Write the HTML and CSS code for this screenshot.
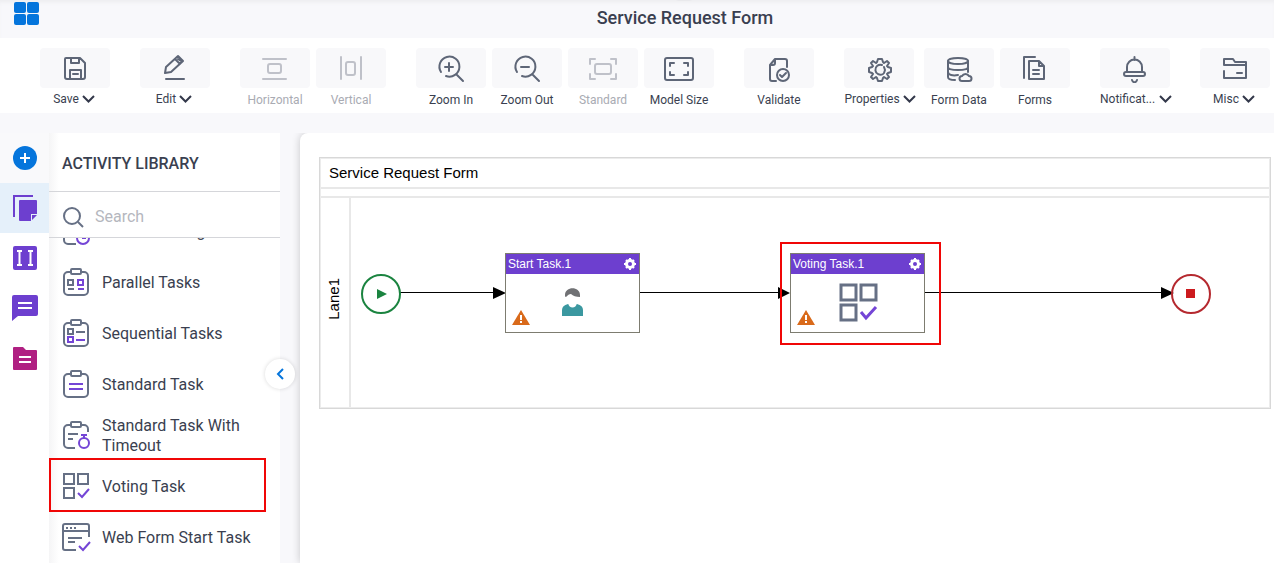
FILE: index.html
```html
<!DOCTYPE html>
<html lang="en">
<head>
  <meta charset="utf-8" />
  <title>Service Request Form</title>
  <meta name="viewport" content="width=device-width, initial-scale=1.0" />
  <link rel="stylesheet" href="styles.css">
</head>

<body>
  <header class="titlebar">
    <button class="apps" title="Apps">
      <svg width="26" height="24" viewBox="0 0 26 24" fill="#0575dc">
        <rect x="0" y="1" width="12" height="11" rx="2" /><rect x="13" y="1" width="12" height="11" rx="2" />
        <rect x="0" y="13" width="12" height="11" rx="2" /><rect x="13" y="13" width="12" height="11" rx="2" />
      </svg>
    </button>
    <h1>Service Request Form</h1>
    <span class="notch"></span>
  </header>

  <nav class="toolbar">
    <div class="group">
      <button class="tool menu">
        <span class="tile"><svg class="icon" viewBox="0 0 30 30"><path d="M6 5h14l5 5v14a2 2 0 0 1-2 2H7a2 2 0 0 1-2-2V6a1 1 0 0 1 1-1zM11 5v5h8V5M10 26v-9h11v9M13 21h5" /></svg></span>
        <span class="label">Save <svg class="caret" viewBox="0 0 13 8"><path d="M1 1l5.5 5.5L12 1" /></svg></span>
      </button>
    </div>
    <div class="group">
      <button class="tool menu">
        <span class="tile"><svg class="icon" viewBox="0 0 30 30"><path d="M5 20l1-6L18 3l5 5-12 11zM15 6l5 5M18 6l3 2M6 26h18" /></svg></span>
        <span class="label">Edit <svg class="caret" viewBox="0 0 13 8"><path d="M1 1l5.5 5.5L12 1" /></svg></span>
      </button>
    </div>
    <div class="group">
      <button class="tool" disabled>
        <span class="tile"><svg class="icon" viewBox="0 0 30 30"><path d="M3 6h23M3 26h23" /><rect x="8" y="11" width="13" height="9" rx="2" /></svg></span>
        <span class="label">Horizontal</span>
      </button>
      <button class="tool" disabled>
        <span class="tile"><svg class="icon" viewBox="0 0 30 30"><path d="M5 4v22M25 4v22" /><rect x="10" y="9" width="9" height="13" rx="2" /></svg></span>
        <span class="label">Vertical</span>
      </button>
    </div>
    <div class="group">
      <button class="tool">
        <span class="tile"><svg class="icon" viewBox="0 0 30 30"><path d="M5 19a10 10 0 1 1 5 4M20 21l7 7M9 14h8M13 10v8" /></svg></span>
        <span class="label">Zoom In</span>
      </button>
      <button class="tool">
        <span class="tile"><svg class="icon" viewBox="0 0 30 30"><path d="M5 19a10 10 0 1 1 5 4M20 21l7 7M9 14h8" /></svg></span>
        <span class="label">Zoom Out</span>
      </button>
      <button class="tool" disabled>
        <span class="tile"><svg class="icon" viewBox="0 0 30 30"><path d="M2 11V6h5M23 6h5v5M28 21v5h-5M7 26H2v-5" /><rect x="7" y="11" width="16" height="10" rx="2" /></svg></span>
        <span class="label">Standard</span>
      </button>
      <button class="tool">
        <span class="tile"><svg class="icon" viewBox="0 0 30 30"><rect x="1" y="5" width="28" height="22" rx="2" /><path d="M6 13v-3h4M20 10h4v3M24 19v3h-4M10 22H6v-3" /></svg></span>
        <span class="label">Model Size</span>
      </button>
    </div>
    <div class="group">
      <button class="tool">
        <span class="tile"><svg class="icon" viewBox="0 0 30 30"><path d="M23 14V8a2 2 0 0 0-2-2H11l-5 6v14a2 2 0 0 0 2 2h4M11 6v4a2 2 0 0 1-2 2H6" /><circle cx="19" cy="22" r="6" /><path d="M16 22l2 2 4-4" /></svg></span>
        <span class="label">Validate</span>
      </button>
    </div>
    <div class="group">
      <button class="tool menu wide">
        <span class="tile">
          <svg class="icon" viewBox="0 0 30 30">
            <g transform="translate(16 17)">
              <path d="M11-2V2L8 3 7 4 9 7 7 9 4 7 3 8 2 11H-2L-3 8-4 7-7 9-9 7-7 4-8 3-11 2V-2L-8-3-7-4-9-7-7-9-4-7-3-8-2-11H2L3-8 4-7 7-9 9-7 7-4 8-3z" />
              <path d="M3 4A5 5 0 1 1 2-5M4-3l1 3-1 3" />
            </g>
          </svg>
        </span>
        <span class="label">Properties <svg class="caret" viewBox="0 0 13 8"><path d="M1 1l5.5 5.5L12 1" /></svg></span>
      </button>
      <button class="tool">
        <span class="tile"><svg class="icon" viewBox="0 0 30 30"><ellipse cx="14" cy="8" rx="10" ry="3" /><path d="M4 8v6c0 4 20 4 20 0V8M4 14v5c0 3 5 4 10 3M24 14v5M4 19v5c0 2 3 3 7 3M18 28h7a2 2 0 0 0 0-5 4 4 0 0 0-7 0 2 2 0 0 0 0 5z" /></svg></span>
        <span class="label">Form Data</span>
      </button>
      <button class="tool">
        <span class="tile"><svg class="icon" viewBox="0 0 30 30"><path d="M4 25V4h11M9 8h10l5 5v13H9zM19 8v5h5M13 17h6M13 21h6" /></svg></span>
        <span class="label">Forms</span>
      </button>
    </div>
    <div class="group">
      <button class="tool menu">
        <span class="tile"><svg class="icon" viewBox="0 0 30 30"><path d="M7 19v-5a7.5 7.5 0 0 1 15 0v5M14.5 7V4M12 27c1 3 4 3 5 0" /><rect x="4" y="19" width="21" height="4" rx="2" /></svg></span>
        <span class="label long"><span>Notificat...</span> <svg class="caret" viewBox="0 0 13 8"><path d="M1 1l5.5 5.5L12 1" /></svg></span>
      </button>
    </div>
    <div class="group">
      <button class="tool menu">
        <span class="tile"><svg class="icon" viewBox="0 0 30 30"><path d="M4 12V6h9l2 3h11v16H4v-7M4 12h22M17 20h5" /></svg></span>
        <span class="label">Misc <svg class="caret" viewBox="0 0 13 8"><path d="M1 1l5.5 5.5L12 1" /></svg></span>
      </button>
    </div>
  </nav>

  <main class="workspace">
    <nav class="rail">
      <button class="add" title="Add"><svg viewBox="0 0 30 30"><circle cx="15" cy="15" r="12" fill="#0575dc" /><path d="M15 10v10M10 15h10" stroke="#fff" stroke-width="2" /></svg></button>
      <button class="active" title="Activities"><svg viewBox="0 0 30 30"><path d="M4 24V3h19" fill="none" stroke="#6d3fcf" stroke-width="2" /><path d="M9 8a1 1 0 0 1 1-1h16a1 1 0 0 1 1 1v13h-6v7H10a1 1 0 0 1-1-1zM22 22h5l-5 5z" fill="#6d3fcf" /></svg></button>
      <button title="Lanes"><svg viewBox="0 0 30 30"><rect x="3" y="3" width="24" height="24" rx="2" fill="#6d3fcf" /><path d="M7 8h5M7 22h5M18 8h5M18 22h5M9.5 8v14M20.5 8v14" stroke="#fff" stroke-width="2" /></svg></button>
      <button title="Comments"><svg viewBox="0 0 30 30"><path d="M2 4a2 2 0 0 1 2-2h22a2 2 0 0 1 2 2v17a2 2 0 0 1-2 2H8l-6 5z" fill="#6d3fcf" /><path d="M8 10h14M8 15h14" stroke="#fff" stroke-width="2" /></svg></button>
      <button title="Documents"><svg viewBox="0 0 30 30"><path d="M3 5a1 1 0 0 1 1-1h9l3 3h10a1 1 0 0 1 1 1v18a1 1 0 0 1-1 1H4a1 1 0 0 1-1-1z" fill="#b02082" /><path d="M9 14h12M9 19h12" stroke="#fff" stroke-width="2" /></svg></button>
    </nav>

    <aside class="library">
      <h2>ACTIVITY LIBRARY</h2>
      <div class="search">
        <label for="search"><svg viewBox="0 0 22 22"><circle cx="10" cy="10" r="8" /><path d="M16 16l5 5" /></svg></label>
        <input type="text" id="search" placeholder="Search" aria-label="Search" />
      </div>
      <div class="scroller">
        <ul>
          <li>
            <svg viewBox="0 0 29 29"><path d="M14 27H6a4 4 0 0 1-4-4V8a4 4 0 0 1 4-4h3M19 4h4a4 4 0 0 1 4 4v5" /><rect x="9" y="1" width="10" height="6" rx="1" /><g class="accent"><circle cx="21" cy="21" r="6" /><path d="M21 18v3h3" /></g></svg>
            Data Archiving
          </li>
          <li>
            <svg viewBox="0 0 29 29"><path d="M9 4H6a4 4 0 0 0-4 4v15a4 4 0 0 0 4 4h16a4 4 0 0 0 4-4V8a4 4 0 0 0-4-4h-3" /><rect x="9" y="1" width="10" height="5" rx="1" /><path d="M6 12h5v5H6zM6 21h6" /><path class="accent" d="M16 12h5v5h-5zM16 21h6" /></svg>
            Parallel Tasks
          </li>
          <li>
            <svg viewBox="0 0 29 29"><path d="M9 4H6a4 4 0 0 0-4 4v15a4 4 0 0 0 4 4h16a4 4 0 0 0 4-4V8a4 4 0 0 0-4-4h-3" /><rect x="9" y="1" width="10" height="5" rx="1" /><path d="M6 10h5v5H6zM14 13h9" /><path class="accent" d="M6 18h5v5H6zM14 21h9" /></svg>
            Sequential Tasks
          </li>
          <li>
            <svg viewBox="0 0 29 29"><path d="M9 4H6a4 4 0 0 0-4 4v15a4 4 0 0 0 4 4h16a4 4 0 0 0 4-4V8a4 4 0 0 0-4-4h-3" /><rect x="9" y="1" width="10" height="5" rx="1" /><path class="accent" d="M7 14h14M7 19h14" /></svg>
            Standard Task
          </li>
          <li>
            <svg viewBox="0 0 29 29"><path d="M13 27H6a4 4 0 0 1-4-4V8a4 4 0 0 1 4-4h3M19 4h3a4 4 0 0 1 4 4v3M6 13h10M6 18h5" /><rect x="9" y="1" width="10" height="5" rx="1" /><g class="accent"><circle cx="22" cy="22" r="5" /><path d="M22 17v-3M19 14h6" /></g></svg>
            Standard Task With Timeout
          </li>
          <li class="marked">
            <svg viewBox="0 0 29 29"><path d="M2 2h10v10H2zM16 2h10v10H16zM2 16h10v10H2z" /><path class="accent" d="M16 21l4 4 7-8" /></svg>
            Voting Task
          </li>
          <li>
            <svg viewBox="0 0 29 29"><path d="M14 27H3a2 2 0 0 1-2-2V3a2 2 0 0 1 2-2h22a2 2 0 0 1 2 2v11M1 8h26M6 15h14M6 19h7M4 5h2M8 5h2M12 5h2" /><path class="accent" d="M17 23l4 4 7-8" /></svg>
            Web Form Start Task
          </li>
        </ul>
      </div>
      <button class="collapse" title="Collapse"><svg viewBox="0 0 8 14"><path d="M7 2L2 7l5 5" /></svg></button>
    </aside>

    <section class="canvas">
      <div class="pool">
        <div class="pool-title">Service Request Form</div>
        <div class="pool-strip"></div>
        <div class="lane">
          <div class="lane-name"><span>Lane1</span></div>
        </div>
      </div>

      <div class="flow">
        <svg class="links" width="974" height="300" viewBox="0 0 974 300">
          <path d="M100 159.5h94M340 159.5h140M625 159.5h237" stroke="#000" />
          <path d="M193 154l13 6-13 6zM478 154l12 6-12 6zM861 154l13 6-13 6z" />
          <circle cx="81" cy="161" r="19" fill="none" stroke="#1b8440" stroke-width="2" />
          <path d="M77 156l10 5-10 5z" fill="#1b8440" />
          <circle cx="891" cy="161" r="19" fill="none" stroke="#b5292f" stroke-width="2" />
          <rect x="886" y="156" width="9" height="9" fill="#cc1a1e" />
        </svg>

        <div class="task start-task">
          <div class="task-title">Start Task.1
            <svg class="gear" viewBox="0 0 12 12"><circle cx="6" cy="6" r="4" /><path d="M6 0v12M0 6h12M2 2l8 8M10 2l-8 8" /><circle class="hub" cx="6" cy="6" r="2" /></svg>
          </div>
          <svg class="person" width="24" height="30" viewBox="0 0 24 30"><path d="M1 29v-6c0-3 2-5 6-6h9c4 1 6 3 6 6v6z" fill="#3b98a0" /><path d="M7 16c1 6 8 6 9 0z" fill="#fff" /><path d="M5 8c2-3 12-3 13 0 0 5-2 10-6 11-4-1-7-6-7-11z" fill="#fff" /><path d="M4 8C4-1 19-1 19 8v2c-4 0-7-1-9-3-2 0-3 1-5 3-1 0-1-1-1-2z" fill="#707174" /></svg>
          <svg class="warn" viewBox="0 0 18 15"><path d="M9 0l9 15H0z" fill="#d96a1b" /><path d="M9 5v5M9 11v2" stroke="#fff" stroke-width="2" /></svg>
        </div>

        <div class="task voting-task">
          <div class="task-title">Voting Task.1
            <svg class="gear" viewBox="0 0 12 12"><circle cx="6" cy="6" r="4" /><path d="M6 0v12M0 6h12M2 2l8 8M10 2l-8 8" /><circle class="hub" cx="6" cy="6" r="2" /></svg>
          </div>
          <svg class="votes" width="40" height="40" viewBox="0 0 40 40"><path d="M3 3h15v15H3zM23 3h15v15H23zM3 23h15v15H3z" /><path class="accent" d="M23 30l5 6 10-11" /></svg>
          <svg class="warn" viewBox="0 0 18 15"><path d="M9 0l9 15H0z" fill="#d96a1b" /><path d="M9 5v5M9 11v2" stroke="#fff" stroke-width="2" /></svg>
        </div>

        <div class="callout"></div>
      </div>
    </section>
  </main>
</body>
</html>
```
FILE: styles.css
```css
* {
  box-sizing: border-box;
}

html, body {
  margin: 0;
  height: 100%;
  overflow: hidden;
}

body {
  display: flex;
  flex-direction: column;
  font-family: Roboto, "Liberation Sans", sans-serif;
  color: #3a3f50;
  background-color: #f8f8fb;
}

button {
  padding: 0;
  border: none;
  background: none;
  font: inherit;
  color: inherit;
  cursor: pointer;
}

svg {
  display: block;
  flex-shrink: 0;
}

/* Title bar */
.titlebar {
  position: relative;
  display: flex;
  flex-shrink: 0;
  height: 38px;
  padding: 0 14px;
  box-shadow: inset 0 4px 4px -2px #ececef;
}

.apps {
  align-self: flex-start;
  width: 26px;
  margin-top: 1px;
}

.titlebar h1 {
  flex: 1;
  margin: 0;
  padding-left: 70px;
  font-size: 18px;
  font-weight: 500;
  line-height: 36px;
  text-align: center;
}

.notch {
  position: absolute;
  top: -9px;
  left: 54%;
  width: 20px;
  height: 10px;
  margin-left: -14px;
  border-radius: 10px;
  background-color: #e9e9ec;
}

/* Toolbar */
.toolbar {
  display: flex;
  flex-shrink: 0;
  gap: 30px;
  height: 75px;
  padding: 10px 0 0 40px;
  background-color: #fff;
}

.group {
  display: flex;
  flex-shrink: 0;
  gap: 6px;
}

.tool {
  display: flex;
  flex-direction: column;
  width: 70px;
}

.wide {
  width: 74px;
}

.tile {
  display: flex;
  align-items: center;
  justify-content: center;
  width: 70px;
  height: 40px;
  border-radius: 4px;
  background-color: #f8f8fa;
}

.icon {
  width: 30px;
  height: 30px;
  fill: none;
  stroke: #5e6677;
  stroke-width: 2;
  stroke-linejoin: round;
  stroke-linecap: round;
}

.label {
  display: flex;
  align-items: center;
  justify-content: center;
  gap: 3px;
  width: 70px;
  height: 24px;
  font-size: 12px;
  white-space: nowrap;
}

.menu .label {
  height: 22px;
  padding-right: 2px;
}

.wide .label {
  width: 74px;
}

.menu .long {
  justify-content: space-between;
  width: 72px;
  padding-right: 0;
}

.caret {
  width: 13px;
  height: 8px;
  fill: none;
  stroke: #33384a;
  stroke-width: 2;
}

.tool:disabled {
  color: #a9abb3;
  cursor: default;
}

.tool:disabled .icon {
  stroke: #bfc1c9;
}

/* Workspace */
.workspace {
  display: flex;
  flex: 1;
  min-height: 0;
  padding-top: 20px;
}

.rail {
  display: flex;
  flex-direction: column;
  flex-shrink: 0;
  width: 49px;
  background-color: #fff;
}

.rail button {
  height: 50px;
  padding-left: 10px;
}

.rail svg {
  width: 30px;
  height: 30px;
}

.rail .add {
  background-color: #f9f9fb;
}

.rail .active {
  background-color: #e5f0fa;
}

.library {
  position: relative;
  display: flex;
  flex-direction: column;
  flex-shrink: 0;
  width: 231px;
  background: linear-gradient(to right, #f5f5f6, #fff 10px);
}

.library h2 {
  margin: 0;
  height: 59px;
  padding-left: 13px;
  border-bottom: 1px solid #d5d6da;
  font-size: 16px;
  font-weight: 500;
  line-height: 62px;
}

.search {
  display: flex;
  align-items: center;
  gap: 11px;
  height: 46px;
  padding: 4px 10px 0 13px;
  border-bottom: 1px solid #d5d6da;
}

.search svg {
  width: 22px;
  height: 22px;
  fill: none;
  stroke: #667085;
  stroke-width: 2;
}

.search input {
  flex: 1;
  min-width: 0;
  padding: 0;
  border: none;
  outline: none;
  background: none;
  font: 16px Roboto, sans-serif;
}

.search input::placeholder {
  color: #b5b7be;
}

.scroller {
  flex: 1;
  min-height: 0;
  overflow: hidden;
}

/* the list is scrolled part of a row down */
.scroller ul {
  margin: -32px 0 0;
  padding: 0;
  list-style: none;
}

.scroller li {
  position: relative;
  display: flex;
  align-items: center;
  gap: 11px;
  height: 51px;
  padding: 0 20px 0 13px;
  font-size: 16px;
  line-height: 20px;
}

.scroller svg {
  width: 29px;
  height: 29px;
  fill: none;
  stroke: #667085;
  stroke-width: 2;
}

svg .accent {
  stroke: #7445d6;
}

.marked::after {
  content: "";
  position: absolute;
  inset: -3px 14px 0 0;
  border: 2px solid #f00606;
}

.collapse {
  position: absolute;
  top: 226px;
  right: -15px;
  z-index: 2;
  display: flex;
  align-items: center;
  justify-content: center;
  width: 30px;
  height: 30px;
  border-radius: 50%;
  background-color: #fff;
  box-shadow: 0 0 4px rgba(0, 0, 0, 0.15);
}

.collapse svg {
  width: 8px;
  height: 14px;
  fill: none;
  stroke: #0575dc;
  stroke-width: 2;
}

/* Process canvas */
.canvas {
  position: relative;
  flex: 1;
  min-width: 0;
  margin-left: 20px;
  padding: 24px 3px 0 19px;
  border-top-left-radius: 8px;
  background-color: #fff;
  box-shadow: 0 0 8px rgba(0, 0, 0, 0.2);
  clip-path: inset(0 0 0 -20px);
  font-family: "Liberation Sans", sans-serif;
  color: #000;
}

.pool {
  border: 1px solid #d8d8d8;
  outline: 1px solid #ececec;
  outline-offset: -2px;
}

.pool-title {
  height: 31px;
  padding-left: 9px;
  border-bottom: 2px solid #e8e8e8;
  font-size: 15px;
  line-height: 30px;
}

.pool-strip {
  height: 9px;
  border-bottom: 2px solid #e8e8e8;
}

.lane {
  display: flex;
  height: 210px;
}

.lane-name {
  display: flex;
  align-items: center;
  justify-content: center;
  width: 31px;
  padding: 0 2px 8px 0;
  border-right: 2px solid #e8e8e8;
  font-size: 15px;
}

.lane-name span {
  writing-mode: vertical-rl;
  transform: rotate(180deg);
}

.flow {
  position: absolute;
  inset: 0;
}

.task {
  position: absolute;
  top: 120px;
  width: 135px;
  height: 80px;
  border: 1px solid #7d7c70;
  background-color: #fff;
}

.start-task {
  left: 205px;
}

.voting-task {
  left: 490px;
}

.task-title {
  display: flex;
  align-items: center;
  justify-content: space-between;
  height: 20px;
  padding: 0 3px 0 2px;
  background-color: #6d3fcf;
  color: #fff;
  font-size: 12px;
}

.gear {
  width: 12px;
  height: 12px;
  fill: #fff;
  stroke: #fff;
  stroke-width: 2;
}

.gear .hub {
  fill: #6d3fcf;
  stroke: none;
}

.person {
  margin: 13px auto 0;
}

.votes {
  margin: 8px auto 0;
  fill: none;
  stroke: #667085;
  stroke-width: 3;
}

.warn {
  position: absolute;
  left: 6px;
  bottom: 7px;
  width: 18px;
  height: 15px;
}

.callout {
  position: absolute;
  top: 109px;
  left: 480px;
  width: 161px;
  height: 103px;
  border: 2px solid #f00606;
}
```
